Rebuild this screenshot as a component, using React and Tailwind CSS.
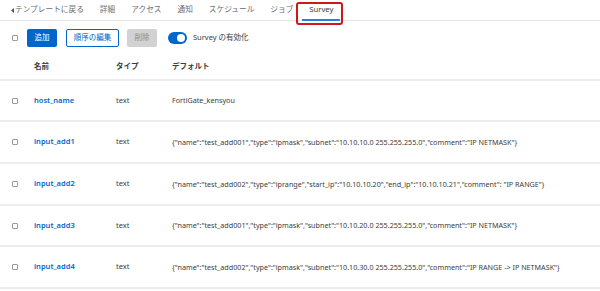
import React from "react";

const font = { fontFamily: '"Noto Sans", "Noto Sans CJK JP", sans-serif' };

const rows = [
  { name: "host_name", type: "text", def: "FortiGate_kensyou", h: "h-[41px]" },
  {
    name: "input_add1",
    type: "text",
    def: '{"name":"test_add001","type":"ipmask","subnet":"10.10.10.0 255.255.255.0","comment":"IP NETMASK"}',
    h: "h-[42px]",
  },
  {
    name: "input_add2",
    type: "text",
    def: '{"name":"test_add002","type":"iprange","start_ip":"10.10.10.20","end_ip":"10.10.10.21","comment": "IP RANGE"}',
    h: "h-[42px]",
  },
  {
    name: "input_add3",
    type: "text",
    def: '{"name":"test_add001","type":"ipmask","subnet":"10.10.20.0 255.255.255.0","comment":"IP NETMASK"}',
    h: "h-[41px]",
  },
  {
    name: "input_add4",
    type: "text",
    def: '{"name":"test_add002","type":"ipmask","subnet":"10.10.30.0 255.255.255.0","comment":"IP RANGE -> IP NETMASK"}',
    h: "h-[42px]",
  },
];

function Check() {
  return <div className="w-[6px] h-[6px] border border-[#9a9a9a] rounded-[1px] bg-white" />;
}

export default function App() {
  const tabs = ["詳細", "アクセス", "通知", "スケジュール", "ジョブ"];
  return (
    <div className="w-[600px] h-[291px] bg-white overflow-hidden text-[7.5px] text-[#3c3c3c]" style={font}>
      {/* Tabs */}
      <div className="relative h-[21px] border-b border-[#e6e6e6] flex items-stretch pl-[3px] text-[7.68px]">
        <div className="flex items-center px-2 text-[#6a6e73]">
          <svg width="3" height="5" viewBox="0 0 3 5" className="mr-[1px]">
            <path d="M3 0 L0 2.5 L3 5 Z" fill="#555" />
          </svg>
          <span>テンプレートに戻る</span>
        </div>
        {tabs.map((t) => (
          <div key={t} className="flex items-center px-2 text-[#6a6e73]">
            {t}
          </div>
        ))}
        <div className="relative flex items-center px-2 text-[#3c3c3c]">
          Survey
          <div className="absolute left-[1px] right-[1px] bottom-[-1px] h-[2px] bg-[#2b7de9]" />
        </div>
        <div className="absolute left-[296px] top-[2px] w-[47px] h-[23px] border-2 border-[#cc1a1a] rounded-[3px]" />
      </div>

      {/* Toolbar */}
      <div className="h-[34px] pt-[8px] flex items-start pl-[12px]">
        <div className="h-[18px] flex items-center">
          <Check />
        </div>
        <div className="ml-[9px] h-[18px] w-[30px] bg-[#0066cc] text-white rounded-[2px] flex items-center justify-center">
          追加
        </div>
        <div className="ml-[9px] h-[18px] w-[53px] border border-[#0066cc] text-[#0066cc] rounded-[2px] flex items-center justify-center">
          順序の編集
        </div>
        <div className="ml-[8px] h-[18px] w-[30px] bg-[#d2d2d2] text-[#8a8d90] rounded-[2px] flex items-center justify-center">
          削除
        </div>
        <div className="ml-[11px] h-[18px] flex items-center">
          <div className="w-[19px] h-[12px] rounded-full bg-[#0066cc] flex items-center justify-end pr-[2px]">
            <div className="w-[8px] h-[8px] rounded-full bg-white" />
          </div>
        </div>
        <div className="ml-[6px] h-[18px] flex items-center text-[#3c3c3c]">Survey の有効化</div>
      </div>

      {/* Header */}
      <div className="h-[26px] border-b-2 border-[#ececec] flex items-center font-bold text-[#3c3c3c]">
        <div className="w-[34px]" />
        <div className="w-[82px]">名前</div>
        <div className="w-[56px]">タイプ</div>
        <div>デフォルト</div>
      </div>

      {/* Rows */}
      {rows.map((r) => (
        <div key={r.name} className={`${r.h} border-b-2 border-[#ececec] flex items-center`}>
          <div className="w-[34px] pl-[12px] flex items-center">
            <Check />
          </div>
          <div className="w-[82px] text-[#0066cc] font-semibold">{r.name}</div>
          <div className="w-[56px]">{r.type}</div>
          <div className="whitespace-nowrap text-[7.2px]">{r.def}</div>
        </div>
      ))}
    </div>
  );
}
